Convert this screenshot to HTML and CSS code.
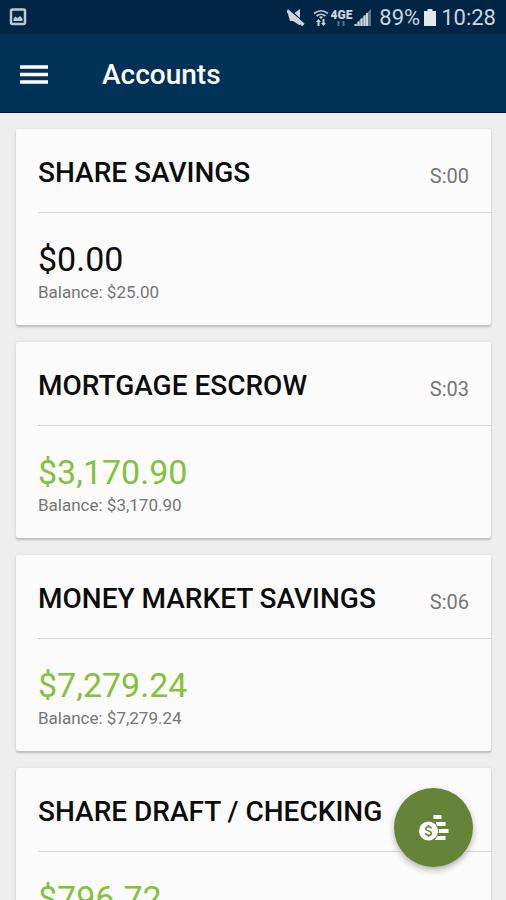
FILE: index.html
```html
<!DOCTYPE html>
<html lang="en">
<head>
<meta charset="utf-8">
<meta name="viewport" content="width=device-width, initial-scale=1">
<title>Accounts</title>
<link rel="stylesheet" href="styles.css">
</head>
<body>
<div class="status">
  <svg class="status-photo" width="18" height="18" viewBox="0 0 18 18" aria-hidden="true"><rect x="2" y="1.500" width="14" height="14.500" rx="1.500" fill="none" stroke="#bcc9d6" stroke-width="2.500"/><path d="M4.500 13V10.500L6.500 8.500L8.500 10L11 8L13.500 10.500V13Z" fill="#bcc9d6"/></svg>
  <div class="status-icons">
    <svg width="18" height="18" viewBox="0 0 18 18" aria-hidden="true"><path d="M1 5H6L13 0V16.500L6 12H3Z" fill="#ccd5de"/><path d="M3 1L17 13.500" stroke="#002545" stroke-width="1.500"/><path d="M0 1.500L16.500 16" stroke="#ccd5de" stroke-width="3.500"/></svg>
    <svg class="wifi" width="16" height="18" viewBox="0 0 16 18" aria-hidden="true"><path d="M1 4.500Q8 -1 15 4.500M3.500 7Q8 3.500 12.500 7" fill="none" stroke="#bac7d3" stroke-width="1.700"/><path d="M6 8Q8 6.500 10 8L8 10Z" fill="#ccd5de"/><path d="M5.500 10L8 13H6.500V17H4.500V13H3ZM10.500 17L8 14H9.500V10H11.500V14H13Z" fill="#ccd5de"/></svg>
    <span class="network"><span class="network-name">4GE</span><svg width="12" height="6" viewBox="0 0 12 6" aria-hidden="true"><path d="M3.500 0V5M8.500 0V5" stroke="#56718a" stroke-width="2"/></svg></span>
    <svg width="18" height="18" viewBox="0 0 18 18" aria-hidden="true"><path d="M0 17L17 0V17Z" fill="#60778d"/><path d="M1.500 17V15M4.500 17V12.500M7.500 17V9.500M10.500 17V6.500M13 17V4" stroke="#ccd5de" stroke-width="2"/></svg>
    <span class="battery-text">89%</span>
    <svg class="battery" width="12" height="18" viewBox="0 0 12 18" aria-hidden="true"><path d="M3.500 0H8.500V2H12V17H0V2H3.500Z" fill="#e3e8ed"/></svg>
    <time>10:28</time>
  </div>
</div>
<header class="appbar">
  <button class="menu" type="button" aria-label="Menu"><svg width="28" height="20" viewBox="0 0 28 20" aria-hidden="true"><path d="M0 2H28M0 9.500H28M0 17H28" stroke="#fff" stroke-width="3.500"/></svg></button>
  <h1>Accounts</h1>
</header>
<main class="accounts">
  <section class="card">
    <div class="card-head"><h2>SHARE SAVINGS</h2><span class="code">S:00</span></div>
    <div class="card-body"><p class="amount">$0.00</p><p class="balance">Balance: $25.00</p></div>
  </section>
  <section class="card">
    <div class="card-head"><h2>MORTGAGE ESCROW</h2><span class="code">S:03</span></div>
    <div class="card-body"><p class="amount positive">$3,170.90</p><p class="balance">Balance: $3,170.90</p></div>
  </section>
  <section class="card">
    <div class="card-head"><h2>MONEY MARKET SAVINGS</h2><span class="code">S:06</span></div>
    <div class="card-body"><p class="amount positive">$7,279.24</p><p class="balance">Balance: $7,279.24</p></div>
  </section>
  <section class="card">
    <div class="card-head"><h2>SHARE DRAFT / CHECKING</h2></div>
    <div class="card-body"><p class="amount positive">$796.72</p></div>
  </section>
</main>
<button class="fab" type="button" aria-label="Move money">
  <svg width="30" height="28" viewBox="0 0 30 28" aria-hidden="true"><path d="M14.500 1H22.500V5H14.500ZM17 8H26.500V12H17ZM19 15H29.500V19H19ZM16 22H26.500V26H16Z" fill="#fff"/><circle cx="9.500" cy="17" r="10.500" fill="#668439"/><circle cx="9.500" cy="17" r="9.500" fill="#fff"/><path d="M12.300 14.500C12 13 10.800 12.800 9.500 12.800C7.800 12.800 6.800 13.600 6.800 14.800C6.800 17.500 12.300 16.300 12.300 19.200C12.300 20.500 11.200 21.300 9.500 21.300C7.800 21.300 6.800 20.600 6.600 19.200M9.500 11V13M9.500 21V23" fill="none" stroke="#668439" stroke-width="1.500"/></svg>
</button>
</body>
</html>
```
FILE: styles.css
```css
* { box-sizing: border-box; }

body {
  margin: 0;
  height: 100vh;
  display: flex;
  flex-direction: column;
  background: #eeeeee;
  color: #0c0c0c;
  font-family: Roboto, "Liberation Sans", sans-serif;
}

h1, h2, p { margin: 0; font-weight: 400; }
button { border: 0; padding: 0; cursor: pointer; }
svg { display: block; flex: none; }

.status {
  flex: none;
  height: 34px;
  padding: 2px 10px 0 9px;
  display: flex;
  align-items: center;
  justify-content: space-between;
  background: #002545;
  color: #ccd5de;
  font-size: 22px;
  line-height: 32px;
}
.status-photo { margin-bottom: 2px; }
.status-icons { display: flex; align-items: center; }
.wifi { margin-left: 8px; }
.network {
  display: flex;
  flex-direction: column;
  align-items: center;
  margin: 0 2px;
}
.network-name {
  font-size: 12px;
  font-weight: 900;
  line-height: 12px;
}
.battery-text { margin-left: 7px; }
.battery { margin: 0 6px 0 4px; }
.status time { margin-left: -1px; }

.appbar {
  flex: none;
  height: 79px;
  padding: 3px 20px 0;
  display: flex;
  align-items: center;
  gap: 54px;
  background: #003156;
  border-bottom: 1px solid #001a45;
  color: #ffffff;
}
.menu { background: none; }
.appbar h1 {
  font-size: 28px;
  font-weight: 500;
  line-height: 36px;
}

.accounts {
  flex: 1;
  min-height: 0;
  padding: 16px 15px 16px 16px;
  display: flex;
  flex-direction: column;
  gap: 17px;
  overflow-y: auto;
  scrollbar-width: none;
}
.card {
  flex: none;
  background: #fbfbfb;
  border-radius: 2px;
  box-shadow: 0 2px 2px #bdbdbd, 0 0 3px #d8d8d8;
}
.card-head {
  height: 84px;
  margin-left: 22px;
  padding: 4px 22px 0 0;
  display: flex;
  align-items: center;
  justify-content: space-between;
  border-bottom: 1px solid #d4d4d4;
}
.card-head h2 {
  font-size: 28px;
  font-weight: 500;
  line-height: 36px;
  white-space: nowrap;
}
.code {
  padding-top: 6px;
  color: #757575;
  font-size: 20px;
  line-height: 24px;
}
.card-body {
  padding: 26px 22px 20px;
}
.amount {
  font-size: 34px;
  line-height: 40px;
}
.positive { color: #82c23c; }
.balance {
  color: #757575;
  font-size: 17px;
  line-height: 26px;
}

.fab {
  position: fixed;
  right: 33px;
  bottom: 33px;
  width: 79px;
  height: 79px;
  display: flex;
  align-items: center;
  justify-content: center;
  border-radius: 50%;
  background: #668439;
  box-shadow: 0 3px 6px #b0b0b0;
}
```
